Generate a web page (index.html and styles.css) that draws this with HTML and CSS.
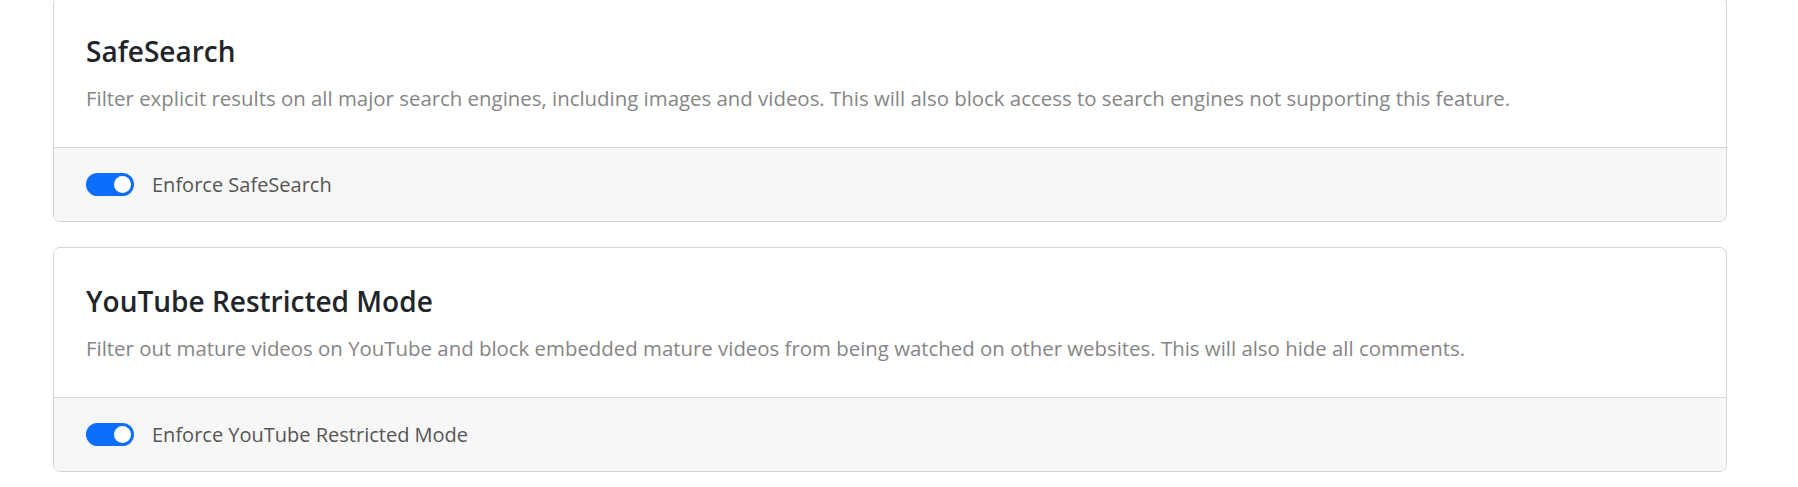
FILE: index.html
```html
<!DOCTYPE html>
<html lang="en">
<head>
<meta charset="utf-8">
<title>Filtering settings</title>
<link rel="stylesheet" href="styles.css">
</head>
<body>
<main class="page">
  <section class="card">
    <div class="card-body">
      <h2 class="card-title">SafeSearch</h2>
      <p class="card-text">Filter explicit results on all major search engines, including images and videos. This will also block access to search engines not supporting this feature.</p>
    </div>
    <div class="card-footer">
      <label class="switch">
        <span class="switch-track"><span class="switch-knob"></span></span>
        <span class="switch-label">Enforce SafeSearch</span>
      </label>
    </div>
  </section>
  <section class="card">
    <div class="card-body">
      <h2 class="card-title">YouTube Restricted Mode</h2>
      <p class="card-text">Filter out mature videos on YouTube and block embedded mature videos from being watched on other websites. This will also hide all comments.</p>
    </div>
    <div class="card-footer">
      <label class="switch">
        <span class="switch-track"><span class="switch-knob"></span></span>
        <span class="switch-label">Enforce YouTube Restricted Mode</span>
      </label>
    </div>
  </section>
</main>
</body>
</html>
```
FILE: styles.css
```css
* { box-sizing: border-box; }
html, body { margin: 0; padding: 0; background: #fff; }
body {
  font-family: "Open Sans", "Noto Sans", sans-serif;
  color: #212529;
}
.page {
  margin-top: -3px;
  padding: 0 71px 0 53px;
  display: flex;
  flex-direction: column;
  gap: 25px;
}
.card {
  border: 1px solid #d6d6d6;
  border-radius: 7px;
  background: #fff;
  overflow: hidden;
}
.card-body {
  padding: 36px 32px 33px;
}
.card-title {
  margin: 0;
  font-size: 28px;
  font-weight: 600;
  line-height: 34px;
  color: #212529;
}
.card-text {
  margin: 15px 0 0;
  font-size: 20.4px;
  line-height: 31px;
  color: #858585;
}
.card-footer {
  border-top: 1px solid #d6d6d6;
  background: #f7f7f7;
  height: 74px;
  padding: 0 32px;
  display: flex;
  align-items: center;
}
.switch {
  display: flex;
  align-items: center;
  gap: 18px;
}
.switch-track {
  width: 48px;
  height: 23px;
  border-radius: 12px;
  background: #0d6efd;
  display: flex;
  align-items: center;
  justify-content: flex-end;
  padding-right: 3px;
}
.switch-knob {
  width: 17px;
  height: 17px;
  border-radius: 50%;
  background: #fff;
}
.switch-label {
  font-size: 20px;
  color: #555;
}
```
